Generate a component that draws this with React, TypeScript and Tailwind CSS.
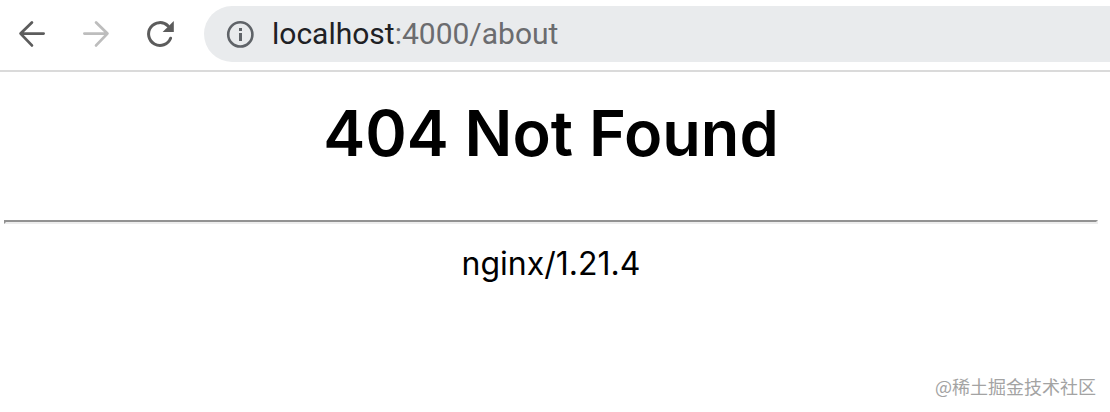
import { useState } from 'react'

const HOST = 'localhost'
const REST = ':4000/about'

function ArrowIcon({ flipped = false }: { flipped?: boolean }) {
  return (
    <svg
      viewBox="0 0 32 32"
      className={flipped ? 'size-8 -scale-x-100' : 'size-8'}
      fill="none"
      stroke="currentColor"
      strokeWidth="2.8"
      strokeLinecap="round"
      aria-hidden="true"
    >
      <path d="M27.6 15.6H4.6M15.9 4.5L4.6 15.6L15.9 27.4" strokeLinejoin="round" />
    </svg>
  )
}

function ReloadIcon() {
  return (
    <svg viewBox="0 0 32 32" className="size-8" aria-hidden="true">
      <path
        d="M26.6 20.2A11.4 11.4 0 1 1 24 7.9"
        fill="none"
        stroke="currentColor"
        strokeWidth="3"
        strokeLinecap="round"
      />
      <path d="M29.8 3V14H18.6Z" fill="currentColor" />
    </svg>
  )
}

function InfoIcon() {
  return (
    <svg viewBox="0 0 32 32" className="size-8 text-[#5f6368]" aria-hidden="true">
      <circle cx="16.3" cy="16.4" r="12.1" fill="none" stroke="currentColor" strokeWidth="2.6" />
      <path d="M15 10h3v3h-3zM15 15h3v8h-3z" fill="currentColor" />
    </svg>
  )
}

function AddressBar() {
  const [focused, setFocused] = useState(false)
  const [url, setUrl]         = useState(HOST + REST)

  return (
    <div className="flex h-14 flex-1 items-center gap-4 rounded-l-full bg-[#e9ebed] pl-5">
      <InfoIcon />
      {focused ? (
        <input
          autoFocus
          aria-label="Address"
          value={url}
          onChange={e => setUrl(e.target.value)}
          onBlur={() => setFocused(false)}
          className="min-w-0 flex-1 bg-transparent text-3xl leading-9 text-[#202124] outline-none"
        />
      ) : (
        <button
          type="button"
          onClick={() => setFocused(true)}
          className="min-w-0 flex-1 truncate text-left text-3xl leading-9 text-[#6b6c6f]"
        >
          <span className="text-[#202124]">{HOST}</span>
          {REST}
        </button>
      )}
    </div>
  )
}

export default function App() {
  return (
    <div className="flex min-h-screen flex-col bg-white font-['Inter','Noto_Sans_CJK_SC',sans-serif] text-black">
      {/* Toolbar */}
      <header className="flex items-center border-b-2 border-[#dadada] pt-1.5 pb-2 pl-4 font-['Roboto',sans-serif]">
        <div className="mr-7 flex gap-8 text-[#5c5c5c]">
          <button type="button" aria-label="Back">
            <ArrowIcon />
          </button>
          <button type="button" aria-label="Forward" disabled className="text-[#bdbdbd]">
            <ArrowIcon flipped />
          </button>
          <button type="button" aria-label="Reload">
            <ReloadIcon />
          </button>
        </div>
        <AddressBar />
      </header>

      {/* Page */}
      <main className="flex-1 pt-4 pr-3 pl-1 text-center">
        <h1 className="text-[63px] leading-[90px] font-semibold">404 Not Found</h1>
        <hr className="mt-[42px] mb-5 h-1 border-2 border-t-[#929292] border-r-[#ededed] border-b-[#ededed] border-l-[#929292]" />
        <p className="text-[32px] leading-10">nginx/1.21.4</p>
      </main>

      <footer className="pr-3.5 pb-3.5 text-right font-['Noto_Sans_CJK_SC',sans-serif] text-lg leading-6 text-[#a3a3a3]">
        @稀土掘金技术社区
      </footer>
    </div>
  )
}
